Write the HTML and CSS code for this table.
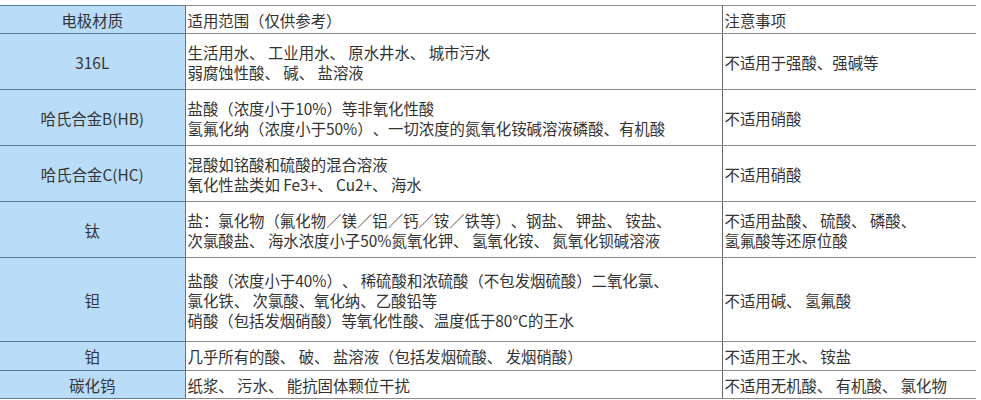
FILE: index.html
```html
<!DOCTYPE html>
<html lang="zh">
<head>
<meta charset="utf-8">
<link rel="stylesheet" href="styles.css">
</head>
<body>
<table class="spec">
  <colgroup>
    <col class="c1">
    <col class="c2">
    <col class="c3">
  </colgroup>
  <tr class="h1">
    <td class="mat">电极材质</td>
    <td>适用范围（仅供参考）</td>
    <td>注意事项</td>
  </tr>
  <tr class="h2">
    <td class="mat">316L</td>
    <td>生活用水、 工业用水、 原水井水、 城市污水<br>弱腐蚀性酸、 碱、 盐溶液</td>
    <td>不适用于强酸、强碱等</td>
  </tr>
  <tr class="h2">
    <td class="mat">哈氏合金B(HB)</td>
    <td>盐酸（浓度小于10%）等非氧化性酸<br>氢氟化纳（浓度小于50%）、一切浓度的氮氧化铵碱溶液磷酸、有机酸</td>
    <td>不适用硝酸</td>
  </tr>
  <tr class="h2">
    <td class="mat">哈氏合金C(HC)</td>
    <td>混酸如铭酸和硫酸的混合溶液<br>氧化性盐类如 Fe3+、 Cu2+、 海水</td>
    <td>不适用硝酸</td>
  </tr>
  <tr class="h2">
    <td class="mat">钛</td>
    <td>盐：氯化物（氟化物／镁／铝／钙／铵／铁等）、钢盐、 钾盐、 铵盐、<br>次氯酸盐、 海水浓度小子50%氮氧化钾、 氢氧化铵、 氮氧化钡碱溶液</td>
    <td>不适用盐酸、 硫酸、 磷酸、<br>氢氟酸等还原位酸</td>
  </tr>
  <tr class="h3">
    <td class="mat">钽</td>
    <td>盐酸（浓度小于40%）、 稀硫酸和浓硫酸（不包发烟硫酸）二氧化氯、<br>氯化铁、 次氯酸、氧化纳、乙酸铅等<br>硝酸（包括发烟硝酸）等氧化性酸、温度低于80°C的王水</td>
    <td>不适用碱、 氢氟酸</td>
  </tr>
  <tr class="h4">
    <td class="mat">铂</td>
    <td>几乎所有的酸、 破、 盐溶液（包括发烟硫酸、 发烟硝酸）</td>
    <td>不适用王水、 铵盐</td>
  </tr>
  <tr class="h1">
    <td class="mat">碳化钨</td>
    <td>纸浆、 污水、 能抗固体颗位干扰</td>
    <td>不适用无机酸、 有机酸、 氯化物</td>
  </tr>
</table>
</body>
</html>
```

FILE: styles.css
```css
html, body {
  margin: 0;
  padding: 0;
  background: #ffffff;
}
body {
  padding-top: 5px;
  font-family: "Noto Sans CJK SC", "Noto Sans", sans-serif;
  font-size: 15.4px;
  color: #333333;
  text-spacing-trim: space-all;
}
.spec {
  border-collapse: collapse;
  table-layout: fixed;
  width: 976px;
}
.c1 { width: 185px; }
.c2 { width: 537px; }
.c3 { width: 254px; }
.spec td {
  padding: 0 0 0 2px;
  line-height: 20px;
  vertical-align: middle;
  border-top: 1px solid #8a8a8a;
  border-bottom: 1px solid #8a8a8a;
  border-left: 1px solid #666666;
  white-space: nowrap;
}
.spec td.mat {
  background: #b9ddf9;
  text-align: center;
  border-left: none;
  border-right: 1px solid #5a7896;
  border-top-color: #5a7896;
  border-bottom-color: #5a7896;
  padding: 0;
}
.h1 { height: 28px; }
.h2 { height: 56px; }
.h3 { height: 84px; }
.h4 { height: 29px; }
```
